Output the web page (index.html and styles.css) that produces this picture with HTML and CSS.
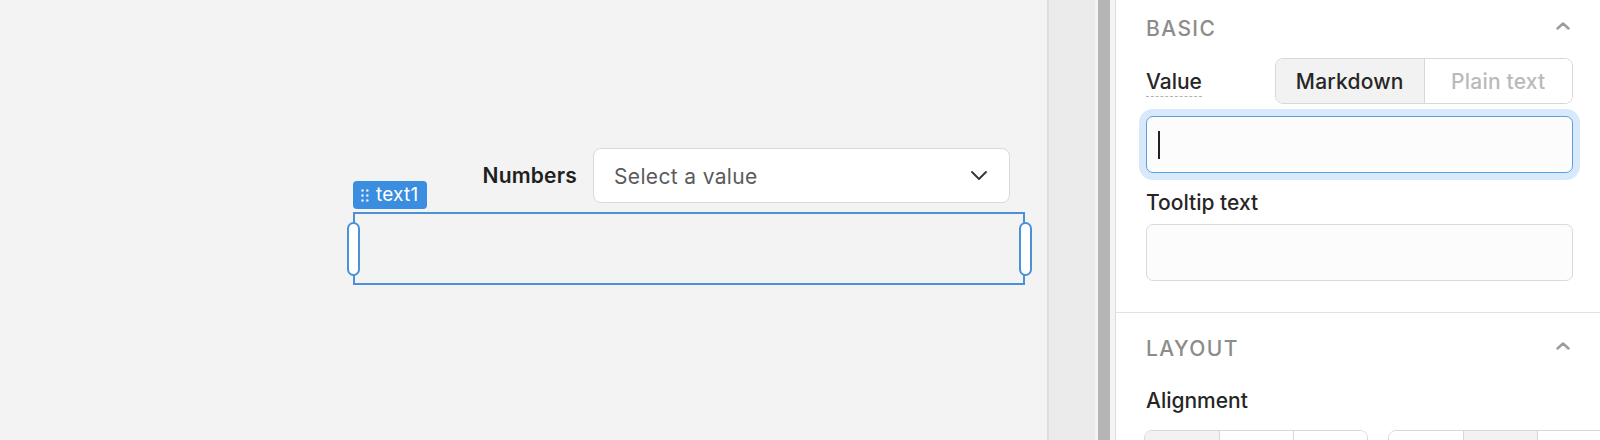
FILE: index.html
```html
<!DOCTYPE html>
<html lang="en">
<head>
<meta charset="utf-8">
<title>Text component editor</title>
<link rel="stylesheet" href="styles.css">
</head>
<body>
<div class="app">
  <main class="canvas">
    <div class="stage">
      <div class="field-row">
        <span class="field-label">Numbers</span>
        <div class="select">
          <span class="select-placeholder">Select a value</span>
          <svg class="select-chevron" width="16" height="9" viewBox="0 0 16 9"><path d="M1 1 L8 8 L15 1" fill="none" stroke="#333" stroke-width="1.8" stroke-linecap="round" stroke-linejoin="round"/></svg>
        </div>
      </div>
      <div class="component">
        <div class="badge">
          <svg class="badge-dots" width="8" height="13" viewBox="0 0 8 13"><g fill="#fff" fill-opacity="0.85"><circle cx="1.5" cy="1.5" r="1.3"/><circle cx="6.3" cy="1.5" r="1.3"/><circle cx="1.5" cy="6.5" r="1.3"/><circle cx="6.3" cy="6.5" r="1.3"/><circle cx="1.5" cy="11.5" r="1.3"/><circle cx="6.3" cy="11.5" r="1.3"/></g></svg>
          <span>text1</span>
        </div>
        <span class="handle handle-left"></span>
        <span class="handle handle-right"></span>
      </div>
    </div>
  </main>
  <div class="gutter"></div>
  <div class="splitter"><div class="splitter-bar"></div></div>
  <aside class="inspector">
    <div class="inspector-scroll">
      <section class="section section-basic">
        <header class="section-head">
          <h2 class="section-title">BASIC</h2>
          <svg class="section-chevron" width="14" height="8" viewBox="0 0 14 8"><path d="M1.5 6.5 L7 1.5 L12.5 6.5" fill="none" stroke="#9b9b9b" stroke-width="2.4" stroke-linecap="round" stroke-linejoin="round"/></svg>
        </header>
        <div class="value-row">
          <span class="label label-dashed">Value</span>
          <div class="segmented">
            <span class="seg seg-active">Markdown</span>
            <span class="seg">Plain text</span>
          </div>
        </div>
        <div class="input input-focused"><span class="caret"></span></div>
        <div class="label label-block">Tooltip text</div>
        <div class="input input-tooltip"></div>
      </section>
      <section class="section section-layout">
        <header class="section-head">
          <h2 class="section-title">LAYOUT</h2>
          <svg class="section-chevron" width="14" height="8" viewBox="0 0 14 8"><path d="M1.5 6.5 L7 1.5 L12.5 6.5" fill="none" stroke="#9b9b9b" stroke-width="2.4" stroke-linecap="round" stroke-linejoin="round"/></svg>
        </header>
        <div class="label label-block label-align">Alignment</div>
        <div class="align-groups">
          <div class="btn-group">
            <span class="cell cell-active"><svg width="24" height="24" viewBox="0 0 24 24"><path d="M2 0 V24 M6 6 H20 M6 12 H16 M6 18 H20" stroke="#555" stroke-width="1.6" fill="none"/></svg></span>
            <span class="cell"><svg width="24" height="24" viewBox="0 0 24 24"><path d="M12 4 V24 M5 8 H19 M7 14 H17" stroke="#777" stroke-width="1.6" fill="none"/></svg></span>
            <span class="cell"><svg width="24" height="24" viewBox="0 0 24 24"><path d="M22 4 V24 M4 8 H18 M8 14 H18" stroke="#777" stroke-width="1.6" fill="none"/></svg></span>
          </div>
          <div class="btn-group">
            <span class="cell"><svg width="24" height="24" viewBox="0 0 24 24"><path d="M0 6 H24 M8 10 V22 M16 10 V18" stroke="#777" stroke-width="1.6" fill="none"/></svg></span>
            <span class="cell cell-active"><svg width="24" height="24" viewBox="0 0 24 24"><path d="M12 0 V24 M4 12 H20" stroke="#555" stroke-width="1.6" fill="none"/></svg></span>
            <span class="cell"><svg width="24" height="24" viewBox="0 0 24 24"><path d="M0 22 H24 M8 6 V18 M16 10 V18" stroke="#777" stroke-width="1.6" fill="none"/></svg></span>
          </div>
        </div>
      </section>
    </div>
  </aside>
</div>
</body>
</html>
```

FILE: styles.css
```css
* { box-sizing: border-box; }

html, body {
  margin: 0;
  padding: 0;
  height: 440px;
  overflow: hidden;
  background: #f3f3f3;
  font-family: Inter, "Noto Sans", "Liberation Sans", sans-serif;
  color: #262626;
}

.app {
  display: flex;
  width: 1600px;
  height: 440px;
  overflow: hidden;
}

/* ---------- canvas ---------- */
.canvas {
  flex: 0 0 1049px;
  height: 100%;
  background: #f3f3f3;
  border-right: 2px solid #dedede;
}

.stage {
  width: 1025px;
  padding: 148px 0 0 353px;
}

.field-row {
  display: flex;
  justify-content: flex-end;
  align-items: center;
  gap: 16px;
  padding-right: 15px;
}

.field-label {
  font-size: 21px;
  font-weight: 600;
  letter-spacing: 0.2px;
  color: #1f1f1f;
  line-height: 30px;
  padding-top: 1px;
}

.select {
  width: 417px;
  height: 55px;
  background: #fff;
  border: 1.5px solid #dadada;
  border-radius: 8px;
  display: flex;
  align-items: center;
  justify-content: space-between;
  padding: 0 22px 0 20px;
}

.select-placeholder {
  font-size: 21px;
  letter-spacing: 0.35px;
  color: #5b5b5b;
  line-height: 30px;
  padding-top: 2px;
}

.component {
  position: relative;
  margin-top: 9px;
  height: 73px;
  border: 2px solid #4b91d8;
}

.badge {
  position: absolute;
  left: -2px;
  bottom: calc(100% + 5px);
  height: 28px;
  display: flex;
  align-items: center;
  gap: 7px;
  padding: 0 9px 0 8px;
  background: #3a8ddf;
  color: #fff;
  border-radius: 4px;
  font-size: 19px;
  letter-spacing: 0.2px;
  line-height: 28px;
}

.handle {
  position: absolute;
  top: 8px;
  width: 13px;
  height: 54px;
  background: #fff;
  border: 2px solid #4b91d8;
  border-radius: 7px;
}
.handle-left { left: -8px; }
.handle-right { right: -9px; }

/* ---------- gutter / splitter ---------- */
.gutter {
  flex: 0 0 46px;
  background: #ebebeb;
}

.splitter {
  flex: 0 0 21px;
  display: flex;
  padding: 0 5px 0 3px;
  background: #f4f4f4;
  border-right: 1px solid #dcdcdc;
}

.splitter-bar {
  flex: 1;
  background: #b5b5b5;
}

/* ---------- inspector ---------- */
.inspector {
  flex: 1;
  background: #fff;
  overflow: hidden;
}

.section {
  padding: 21px 27px 0 30px;
  border-bottom: 1px solid #e2e2e2;
}

.section-basic {
  padding-top: 14px;
  padding-bottom: 31px;
}

.section-basic .value-row {
  margin-top: 14px;
}

.section-head {
  display: flex;
  justify-content: space-between;
  align-items: center;
  height: 30px;
  padding-right: 3px;
}

.section-chevron {
  margin-top: -6px;
}

.section-title {
  margin: 0;
  font-size: 21px;
  font-weight: 500;
  letter-spacing: 1.4px;
  color: #8c8c8c;
  line-height: 30px;
}

.label {
  font-size: 21px;
  font-weight: 500;
  line-height: 30px;
  color: #262626;
}

.value-row {
  margin-top: 15px;
  display: flex;
  justify-content: space-between;
  align-items: center;
  height: 46px;
}

.label-dashed {
  display: inline-block;
  line-height: 26px;
  padding-bottom: 1px;
  border-bottom: 1.5px dashed #b2b2b2;
  margin-top: 3px;
}

.segmented {
  display: flex;
  width: 298px;
  height: 46px;
  border: 1.5px solid #d8d8d8;
  border-radius: 8px;
  overflow: hidden;
}

.seg {
  flex: 1;
  display: flex;
  align-items: center;
  justify-content: center;
  font-size: 21px;
  font-weight: 500;
  letter-spacing: 0.2px;
  color: #bababa;
  background: #fff;
}

.seg-active {
  background: #f2f2f2;
  color: #262626;
  border-right: 1.5px solid #d8d8d8;
}

.input {
  height: 57px;
  background: #fcfcfc;
  border: 1.5px solid #dadada;
  border-radius: 7px;
}

.input-focused {
  margin-top: 12px;
  border-color: #5d9fe0;
  box-shadow: 0 0 0 7px #d7e9fb;
  display: flex;
  align-items: center;
  padding-left: 11px;
}

.caret {
  width: 2px;
  height: 28px;
  background: #222;
}

.label-block {
  margin-top: 15px;
}

.input-tooltip {
  margin-top: 6px;
}

.label-align {
  margin-top: 22px;
}

.align-groups {
  margin-top: 14px;
  margin-left: -2px;
  display: flex;
  gap: 20px;
  width: 600px;
}

.btn-group {
  display: flex;
  border: 1.5px solid #d8d8d8;
  border-radius: 8px;
  overflow: hidden;
  height: 46px;
}

.cell {
  width: 74px;
  display: flex;
  justify-content: center;
  padding-top: 9px;
  background: #fff;
}

.cell + .cell {
  border-left: 1.5px solid #d8d8d8;
}

.cell-active {
  background: #f2f2f2;
}
```
